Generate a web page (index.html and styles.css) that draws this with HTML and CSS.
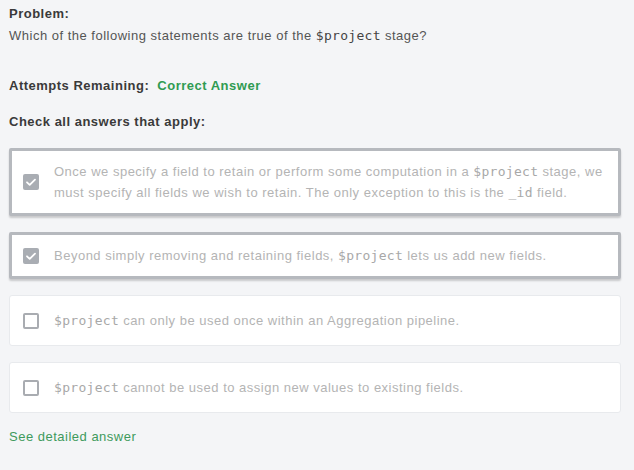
FILE: index.html
```html
<!DOCTYPE html>
<html>
<head>
<meta charset="utf-8">
<link rel="stylesheet" href="styles.css">
</head>
<body>
<div class="page">
  <div class="problem">
    <div class="label">Problem:</div>
    <div class="question">Which of the following statements are true of the <code>$project</code> stage?</div>
  </div>
  <div class="attempts"><span class="label">Attempts Remaining:</span> <span class="correct">Correct Answer</span></div>
  <div class="label check-label">Check all answers that apply:</div>
  <div class="options">
    <div class="option selected">
      <span class="box checked"><svg viewBox="0 0 16 16" width="16" height="16"><path d="M4 8.3l2.7 2.6L12 5.6" fill="none" stroke="#fff" stroke-width="1.8" stroke-linecap="round" stroke-linejoin="round"/></svg></span>
      <span class="text">Once we specify a field to retain or perform some computation in a <code>$project</code> stage, we must specify all fields we wish to retain. The only exception to this is the <code>_id</code> field.</span>
    </div>
    <div class="option selected">
      <span class="box checked"><svg viewBox="0 0 16 16" width="16" height="16"><path d="M4 8.3l2.7 2.6L12 5.6" fill="none" stroke="#fff" stroke-width="1.8" stroke-linecap="round" stroke-linejoin="round"/></svg></span>
      <span class="text">Beyond simply removing and retaining fields, <code>$project</code> lets us add new fields.</span>
    </div>
    <div class="option">
      <span class="box"></span>
      <span class="text"><code>$project</code> can only be used once within an Aggregation pipeline.</span>
    </div>
    <div class="option">
      <span class="box"></span>
      <span class="text"><code>$project</code> cannot be used to assign new values to existing fields.</span>
    </div>
  </div>
  <div class="detail">See detailed answer</div>
</div>
</body>
</html>
```
FILE: styles.css
```css
html, body {
  margin: 0;
  padding: 0;
  background: #f4f5f7;
}
body {
  font-family: "Liberation Sans", Arial, sans-serif;
  font-size: 13px;
  letter-spacing: 0.5px;
  color: #555;
}
.page {
  width: 612px;
  padding: 5px 13px 20px 9px;
}
.label {
  font-weight: bold;
  color: #3a3a3a;
}
.problem .label {
  line-height: 18px;
}
.question {
  line-height: 18px;
  margin-top: 4px;
  color: #555;
}
code {
  font-family: "DejaVu Sans Mono", "Liberation Mono", monospace;
  font-size: 13px;
  letter-spacing: 0.3px;
}
.question code {
  color: #444;
}
.attempts {
  margin-top: 32px;
  line-height: 18px;
}
.correct {
  color: #2f9b52;
  font-weight: bold;
  margin-left: 4px;
}
.check-label {
  margin-top: 18px;
  line-height: 18px;
}
.options {
  margin-top: 17px;
  display: flex;
  flex-direction: column;
  gap: 16px;
}
.option {
  background: #fff;
  border: 1px solid #e8eaed;
  border-radius: 3px;
  display: flex;
  align-items: center;
  padding: 14px 12px 14px 13px;
  gap: 15px;
  color: #b4b4b4;
  line-height: 21px;
}
.option code {
  color: #a8a8a8;
}
.option.selected {
  border: 3px solid #b6b9be;
  padding: 10px 12px 10px 11px;
  box-shadow: 0 2px 2px rgba(0,0,0,0.18);
  border-radius: 2px;
}
.box {
  flex: none;
  width: 16px;
  height: 16px;
  box-sizing: border-box;
  border: 2px solid #a9acb1;
  border-radius: 2px;
  display: flex;
}
.box.checked {
  background: #a9adb3;
  border: none;
}
.text {
  flex: 1;
}
.detail {
  margin-top: 15px;
  color: #3e9a5c;
  line-height: 18px;
}
```
